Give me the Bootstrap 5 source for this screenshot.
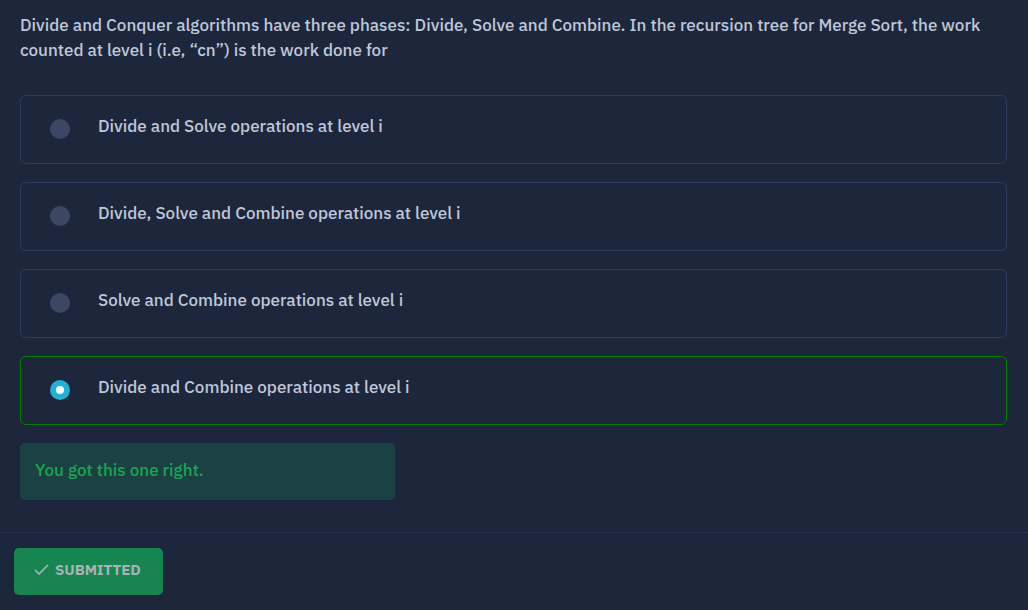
<!DOCTYPE html>
<html lang="en">
<head>
<meta charset="utf-8">
<meta name="viewport" content="width=device-width, initial-scale=1">
<title>Merge Sort quiz</title>
<link href="https://cdn.jsdelivr.net/npm/bootstrap@5.3.0/dist/css/bootstrap.min.css" rel="stylesheet">
<style>
body { background: #1d273b; color: #bfc8d8; font-family: "IBM Plex Sans", Roboto, "Liberation Sans", sans-serif; font-size: 17px; font-weight: 500; line-height: 25px; }
.quiz-body { padding: 13px 21px 32px 20px; }
.question { margin-bottom: 32px; font-size: 17px; line-height: 25px; }
.options { gap: 18px; }
.option { min-height: 69px; gap: 28px; padding: 18px 29px; border: 1px solid #2c3a5e; border-radius: 6px; cursor: pointer; }
.option.correct { border-color: #008000; }
.option .form-check-input { width: 20px; height: 20px; margin: 5px 0 0; border: 0; background-color: #3b4763; background-size: 16px; }
.option .form-check-input:checked { background-color: #1fb3d3; }
.feedback { max-width: 375px; margin-top: 18px; padding: 15px 15px 17px; border-radius: 5px; background: #1b4242; color: #17a656; }
.quiz-footer { padding: 15px 14px; border-top: 1px solid #223149; }
.btn-submitted, .btn-submitted:hover { gap: 6px; height: 47px; padding: 0 22px 3px 20px; border: 0; border-radius: 5px; background: #16854f; color: #a9b3b7; font-size: 15px; font-weight: 700; }
</style>
</head>
<body>
<main>
  <form class="quiz-body">
    <fieldset>
      <legend class="question">Divide and Conquer algorithms have three phases: Divide, Solve and Combine. In the recursion tree for Merge Sort, the work counted at level i (i.e, “cn”) is the work done for</legend>
      <div class="options d-flex flex-column">
        <label class="option d-flex align-items-start" for="a"><input class="form-check-input flex-shrink-0" type="radio" name="answer" id="a"><span>Divide and Solve operations at level i</span></label>
        <label class="option d-flex align-items-start" for="b"><input class="form-check-input flex-shrink-0" type="radio" name="answer" id="b"><span>Divide, Solve and Combine operations at level i</span></label>
        <label class="option d-flex align-items-start" for="c"><input class="form-check-input flex-shrink-0" type="radio" name="answer" id="c"><span>Solve and Combine operations at level i</span></label>
        <label class="option correct d-flex align-items-start" for="d"><input class="form-check-input flex-shrink-0" type="radio" name="answer" id="d" checked><span>Divide and Combine operations at level i</span></label>
      </div>
    </fieldset>
    <div class="feedback" role="status">You got this one right.</div>
  </form>
  <footer class="quiz-footer">
    <button class="btn btn-submitted d-inline-flex align-items-center" type="button">
      <svg width="15" height="12" viewBox="0 0 15 12" fill="none" stroke="currentColor" stroke-width="1.7" aria-hidden="true"><path d="M1 6 5 10 14 1"/></svg>
      SUBMITTED
    </button>
  </footer>
</main>
<script src="https://cdn.jsdelivr.net/npm/bootstrap@5.3.0/dist/js/bootstrap.bundle.min.js"></script>
</body>
</html>
